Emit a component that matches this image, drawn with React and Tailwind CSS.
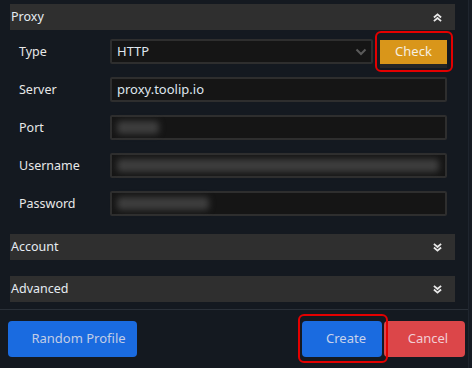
import React from 'react';

const font = { fontFamily: '"Noto Sans", "Open Sans", sans-serif' };

function DoubleChevron({ up }) {
  return (
    <svg width="9" height="9" viewBox="0 0 10 10" className={up ? '' : 'rotate-180'}>
      <path d="M1 5 L5 1.5 L9 5" fill="none" stroke="#e8e8e8" strokeWidth="2" />
      <path d="M1 9 L5 5.5 L9 9" fill="none" stroke="#e8e8e8" strokeWidth="2" />
    </svg>
  );
}

function SectionBar({ title, up }) {
  return (
    <div className="flex items-center justify-between h-[26px] bg-[#2f2f2f] pl-[1px] pr-[13px]">
      <span className="text-[12.5px] text-[#e6ecf2]">{title}</span>
      <DoubleChevron up={up} />
    </div>
  );
}

function Field({ children, className = '' }) {
  return (
    <div className={'h-[25px] bg-[#151515] border-2 border-[#2e2e2e] rounded-[2px] flex items-center pl-[5px] ' + className}>
      {children}
    </div>
  );
}

function Blur({ w }) {
  return <div className={'h-[13px] bg-[#3e3e3e] blur-[3px] rounded ' + w} />;
}

function Row({ label, children }) {
  return (
    <div className="flex items-start h-[25px]">
      <div className="w-[100px] pl-[9px] leading-[25px] text-[12.5px] text-[#e8e8e8]">{label}</div>
      {children}
    </div>
  );
}

export default function App() {
  return (
    <div className="w-[472px] h-[368px] bg-[#141920] flex overflow-hidden" style={font}>
      <div className="w-[468px] flex flex-col">
        <div className="pl-[10px] pr-[13px] pt-[4px]">
          <SectionBar title="Proxy" up />
          <div className="flex flex-col gap-[13px] pt-[9px] pr-[8px]">
            <Row label="Type">
              <Field className="w-[263px] justify-between pr-[4px]">
                <span className="text-[13px] text-[#dfe6ee]">HTTP</span>
                <svg width="12" height="8" viewBox="0 0 12 8">
                  <path d="M1.5 1.5 L6 6 L10.5 1.5" fill="none" stroke="#5a5a5a" strokeWidth="2" />
                </svg>
              </Field>
              <div className="relative ml-[7px] mt-[1px]">
                <button className="block w-[67px] h-[28px] bg-[#d9961a] border-b-4 border-[#262626] text-[13px] text-[#f6efe0] pb-[1px]">
                  Check
                </button>
                <div className="absolute -left-[5px] -right-[6px] -top-[9px] -bottom-[4px] border-2 border-[#e30000] rounded-[6px]" />
              </div>
            </Row>
            <Row label="Server">
              <Field className="flex-1">
                <span className="text-[13px] text-[#dfe6ee]">proxy.toolip.io</span>
              </Field>
            </Row>
            <Row label="Port">
              <Field className="flex-1"><Blur w="w-[42px]" /></Field>
            </Row>
            <Row label="Username">
              <Field className="flex-1 pr-[6px]"><Blur w="flex-1" /></Field>
            </Row>
            <Row label="Password">
              <Field className="flex-1"><Blur w="w-[92px]" /></Field>
            </Row>
          </div>
          <div className="mt-[18px]">
            <SectionBar title="Account" />
          </div>
          <div className="mt-[16px]">
            <SectionBar title="Advanced" />
          </div>
        </div>
        <div className="mt-[7px] border-t border-[#2a3038]" />
        <div className="flex items-center pt-[11px] pl-[8px] pr-[3px]">
          <button className="w-[129px] h-[36px] bg-[#1a6be0] rounded-[4px] pl-[12px] text-[13px] text-[#c2cde6]">
            Random Profile
          </button>
          <div className="flex-1" />
          <div className="relative z-10">
            <button className="block w-[80px] h-[36px] bg-[#1a6be0] rounded-[4px] pl-[8px] text-[13px] text-[#c8d2ea]">
              Create
            </button>
            <div className="absolute -left-[4px] -right-[6px] -top-[7px] -bottom-[6px] border-2 border-[#e30000] rounded-[6px]" />
          </div>
          <button className="ml-[2px] w-[81px] h-[36px] bg-[#dc4649] rounded-[4px] pl-[7px] text-[13px] text-[#f2cdd4]">
            Cancel
          </button>
        </div>
      </div>
      <div className="flex-1 border-l border-[#1f252e] bg-[#161b23]" />
    </div>
  );
}
